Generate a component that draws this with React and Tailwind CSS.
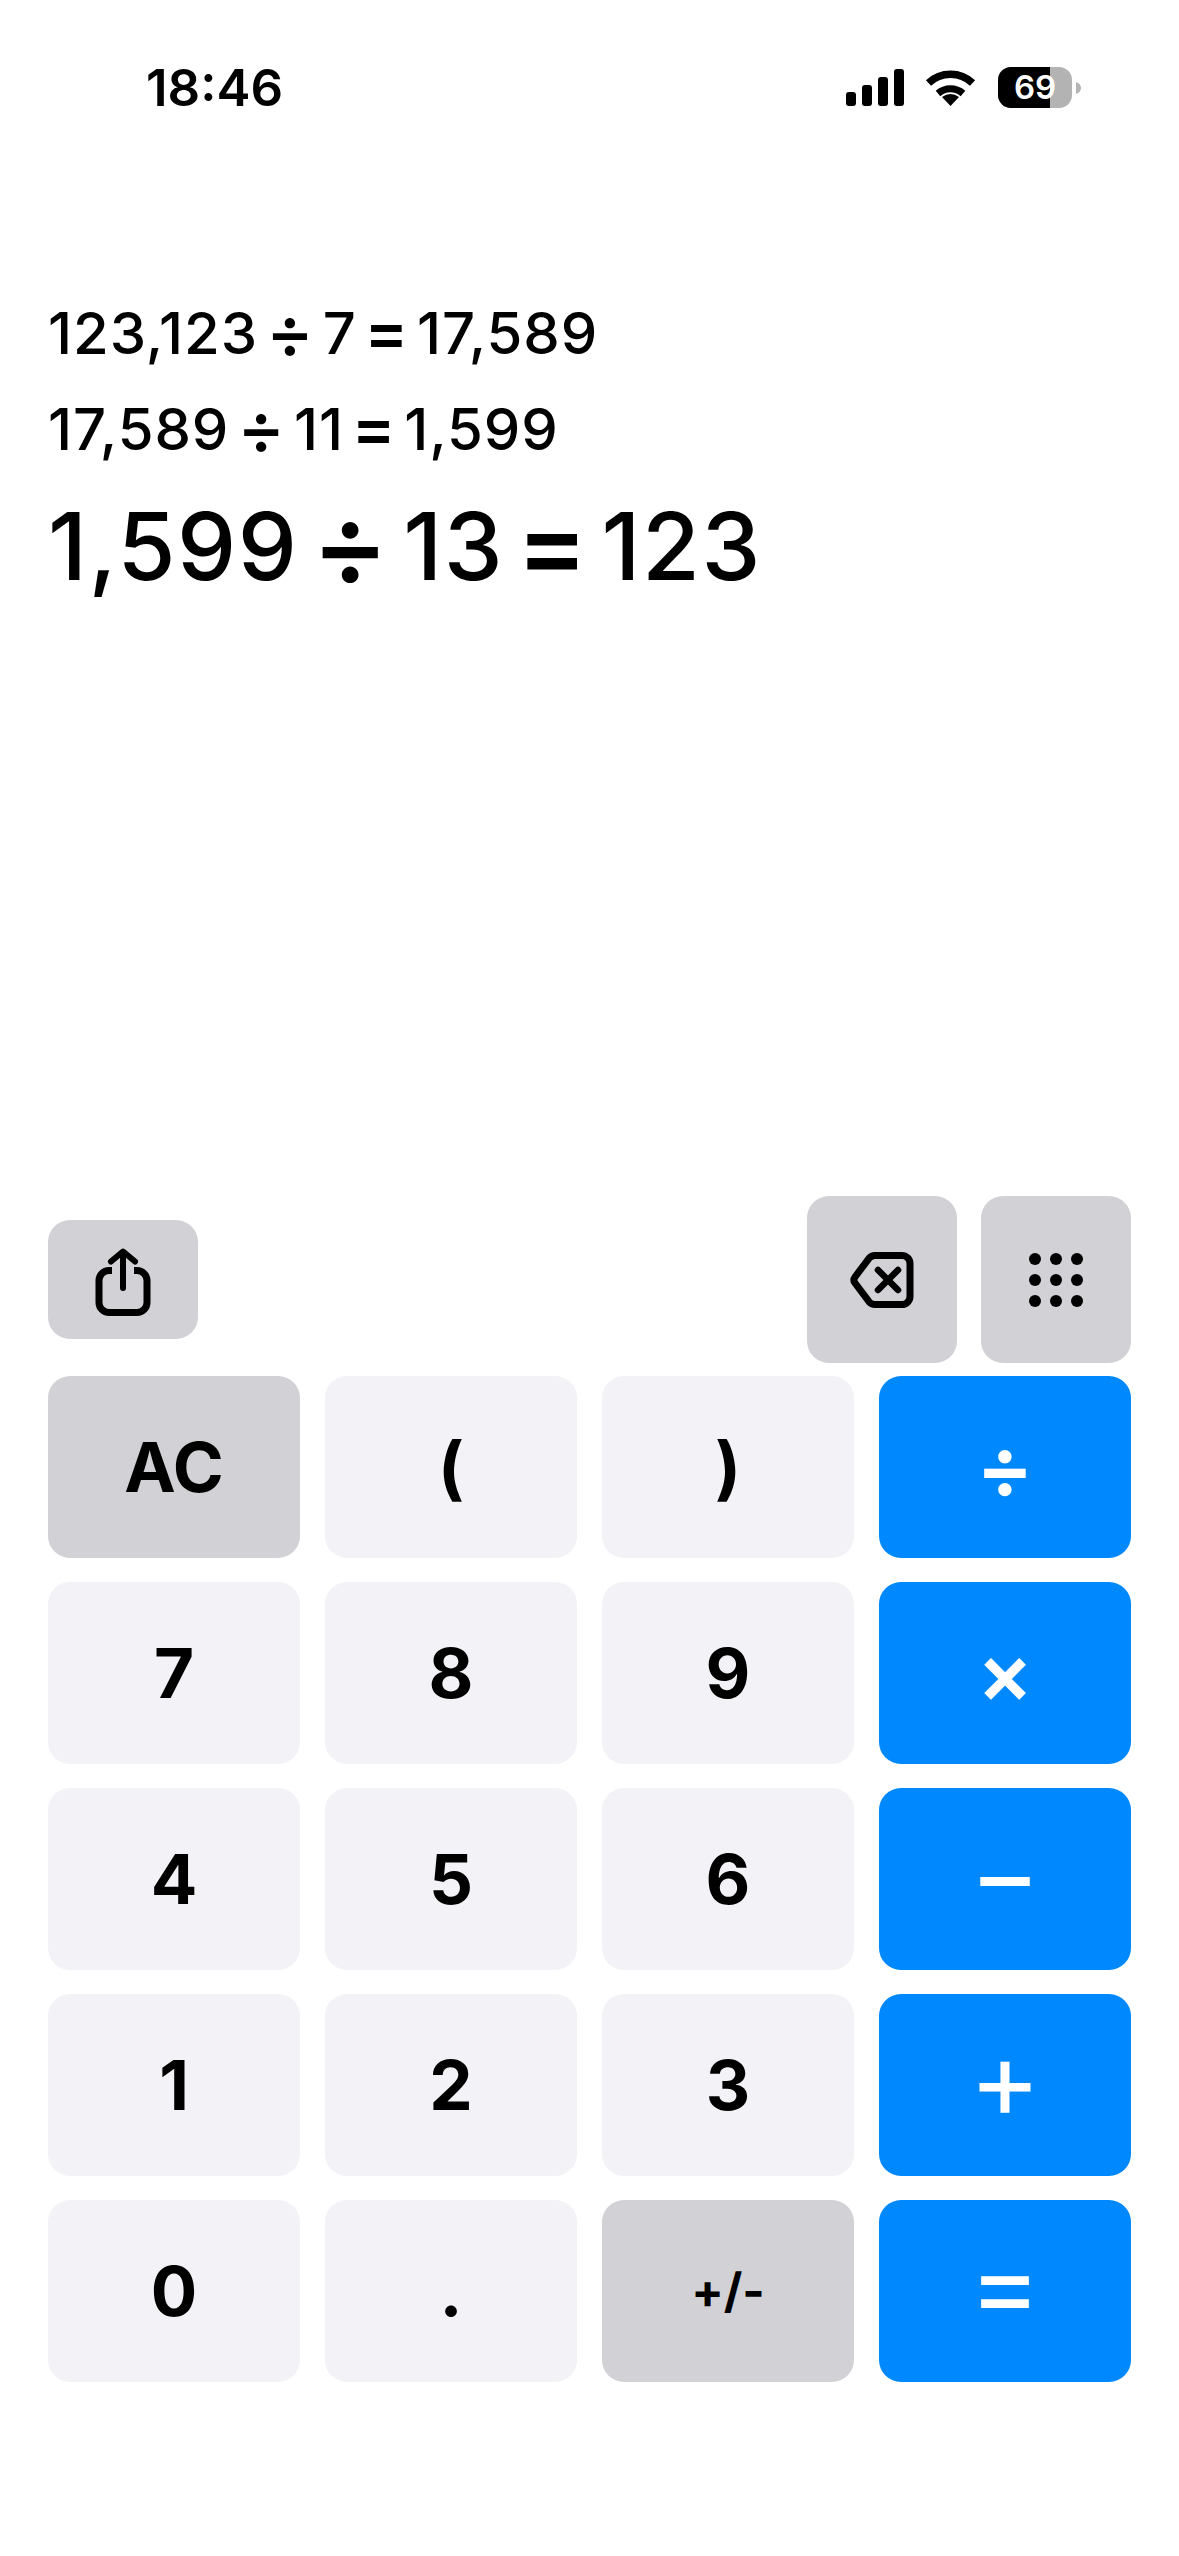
const sans = { fontFamily: 'Inter, "Liberation Sans", sans-serif' };

const keys = [
  { label: 'AC', kind: 'gray' },
  { label: '(', kind: 'light' },
  { label: ')', kind: 'light' },
  { label: '÷', kind: 'op', extra: 'text-[86px] font-semibold' },
  { label: '7', kind: 'light' },
  { label: '8', kind: 'light' },
  { label: '9', kind: 'light' },
  { label: '×', kind: 'op', extra: 'text-[84px] font-semibold' },
  { label: '4', kind: 'light' },
  { label: '5', kind: 'light' },
  { label: '6', kind: 'light' },
  { label: '−', kind: 'op', extra: 'text-[108px] font-normal pb-[12px]' },
  { label: '1', kind: 'light' },
  { label: '2', kind: 'light' },
  { label: '3', kind: 'light' },
  { label: '+', kind: 'op', extra: 'text-[108px] font-normal pb-[12px]' },
  { label: '0', kind: 'light' },
  { label: '.', kind: 'light' },
  { label: '+/-', kind: 'small' },
  { label: '=', kind: 'op', extra: 'text-[108px] font-normal pb-[15px]' },
];

const keyStyles = {
  light: 'bg-[#f2f2f7] text-black text-[69px] font-bold',
  gray: 'bg-[#d1d1d6] text-black text-[69px] font-bold',
  small: 'bg-[#d1d1d6] text-black text-[48px] font-bold',
  op: 'bg-[#0088ff] text-white',
};

// operators in the history lines are drawn larger and heavier than the digits
const Div = () => <span className="text-[1.25em] font-medium leading-none align-[-0.05em]">÷</span>;
const Eq = () => <span className="text-[1.12em] font-semibold leading-none align-[-0.02em]">=</span>;

const Line = ({ a, b, c, className }) => (
  <div className={`[word-spacing:-0.15em] tracking-[0.016em] font-[450] whitespace-nowrap ${className}`}>
    {a} <Div /> {b} <Eq /> {c}
  </div>
);

const SignalIcon = () => (
  <svg width="58" height="37" viewBox="0 0 58 37" fill="black">
    <rect x="0" y="23" width="10" height="14" rx="3" />
    <rect x="16" y="16" width="10" height="21" rx="3" />
    <rect x="32" y="8" width="10" height="29" rx="3" />
    <rect x="48" y="0" width="10" height="37" rx="3" />
  </svg>
);

const WifiIcon = () => (
  <svg width="51" height="37" viewBox="0 0 51 37" fill="none" stroke="black">
    <path d="M3.5 14A32 32 0 0 1 47.5 14" strokeWidth="7.5" />
    <path d="M13 24.5A19 19 0 0 1 38 24.5" strokeWidth="7" />
    <path d="M25.5 37L17 28Q25.5 22 34 28Z" fill="black" stroke="none" />
  </svg>
);

const Battery = () => (
  <div className="flex items-center gap-[4px]">
    <div className="relative w-[74px] h-[41px] rounded-[13px] overflow-hidden bg-[#b3b3b3] flex items-center justify-center">
      <div className="absolute left-0 top-0 bottom-0 w-[52px] bg-black" />
      <span className="relative text-white text-[33px] font-semibold leading-none" style={sans}>69</span>
    </div>
    <svg width="5" height="12" viewBox="0 0 5 12" fill="#b3b3b3">
      <path d="M0 0C3 1 5 3 5 6C5 9 3 11 0 12Z" />
    </svg>
  </div>
);

const ShareIcon = () => (
  <svg width="56" height="70" viewBox="0 0 56 70" fill="none" stroke="black" className="mt-[5px]">
    <path d="M17 23.5h-3a10 10 0 0 0-10 10v22a10 10 0 0 0 10 10h28a10 10 0 0 0 10-10v-22a10 10 0 0 0-10-10h-3" strokeWidth="7" />
    <path d="M28 5V41M16 14.5L28 4.500L40 14.500" strokeWidth="6" strokeLinecap="round" strokeLinejoin="round" />
  </svg>
);

const BackspaceIcon = () => (
  <svg width="64" height="56" viewBox="0 0 64 56" fill="none" stroke="black" strokeLinejoin="round" strokeLinecap="round">
    <path d="M25 3.500H52a8 8 0 0 1 8 8v33a8 8 0 0 1-8 8H25a8 8 0 0 1-6-2.800L5 31a5 5 0 0 1 0-6L19 6.300a8 8 0 0 1 6-2.800z" strokeWidth="7" />
    <path d="M28 18L48 38M48 18L28 38" strokeWidth="6.500" />
  </svg>
);

const GridIcon = () => (
  <svg width="54" height="54" viewBox="0 0 54 54" fill="black">
    {[6, 27, 48].map((y) =>
      [6, 27, 48].map((x) => <circle key={`${x}-${y}`} cx={x} cy={y} r="6" />)
    )}
  </svg>
);

export default function App() {
  return (
    <div className="w-[1179px] h-[2556px] bg-white flex flex-col text-black overflow-hidden" style={sans}>
      <div className="flex items-center justify-between pt-[67px] pl-[146px] pr-[98px]">
        <span className="text-[51px] leading-[41px] font-semibold">18:46</span>
        <div className="flex items-center">
          <SignalIcon />
          <div className="ml-[21px]"><WifiIcon /></div>
          <div className="ml-[22px]"><Battery /></div>
        </div>
      </div>

      <div className="pt-[177px] pl-[48px]">
        <div className="h-[96px] flex items-center"><Line a="123,123" b="7" c="17,589" className="text-[58px] leading-[96px]" /></div>
        <div className="h-[96px] flex items-center"><Line a="17,589" b="11" c="1,599" className="text-[58px] leading-[96px]" /></div>
        <div className="h-[138px] flex items-center"><Line a="1,599" b="13" c="123" className="text-[94px] leading-[138px]" /></div>
      </div>

      <div className="mt-auto pb-[174px] pl-[48px] pr-[48px]">
        <div className="flex items-center justify-between h-[167px] mb-[13px]">
          <button className="w-[150px] h-[119px] rounded-[22px] bg-[#d1d1d6] flex items-center justify-center">
            <ShareIcon />
          </button>
          <div className="flex gap-[24px]">
            <button className="w-[150px] h-[167px] rounded-[22px] bg-[#d1d1d6] flex items-center justify-center">
              <BackspaceIcon />
            </button>
            <button className="w-[150px] h-[167px] rounded-[22px] bg-[#d1d1d6] flex items-center justify-center">
              <GridIcon />
            </button>
          </div>
        </div>
        <div className="grid grid-cols-4 gap-x-[25px] gap-y-[24px]">
          {keys.map((key) => (
            <button
              key={key.label}
              className={`h-[182px] rounded-[22px] flex items-center justify-center leading-none ${keyStyles[key.kind]} ${key.extra || ''}`}
            >
              {key.label}
            </button>
          ))}
        </div>
      </div>
    </div>
  );
}
